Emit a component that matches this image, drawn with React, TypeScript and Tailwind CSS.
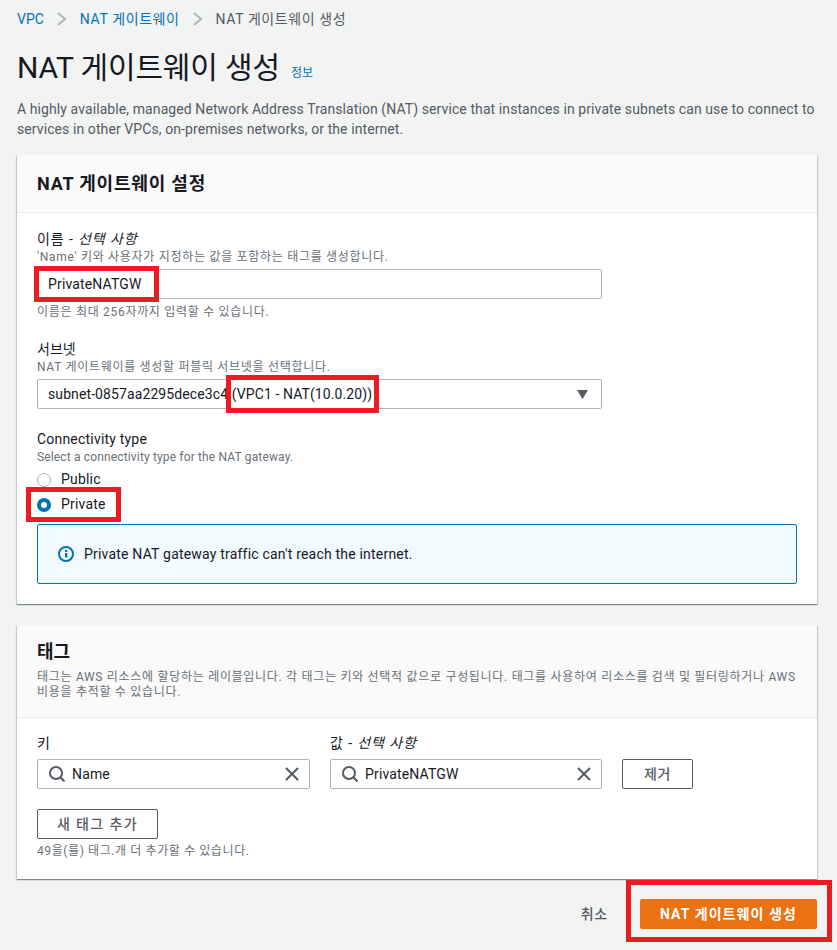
import React from "react";

const font = { fontFamily: 'Roboto, "Noto Sans CJK KR", sans-serif' };

function Search() {
  return (
    <svg width="16" height="16" viewBox="0 0 16 16" fill="none" stroke="#545b64" strokeWidth="2" className="shrink-0">
      <circle cx="7" cy="7" r="6" />
      <path d="M11.5 11.5 L15.5 15.5" />
    </svg>
  );
}

function Close() {
  return (
    <svg width="14" height="14" viewBox="0 0 14 14" fill="none" stroke="#545b64" strokeWidth="2" className="shrink-0">
      <path d="M1 1 L13 13 M13 1 L1 13" />
    </svg>
  );
}

function Chevron() {
  return (
    <svg width="10" height="16" viewBox="0 0 10 16" fill="none" stroke="#aab7b8" strokeWidth="2">
      <path d="M1 2 L8 8 L1 14" />
    </svg>
  );
}

function TokenInput({ value, className }: { value: string; className: string }) {
  return (
    <div className={`h-[30px] flex items-center pl-[11px] pr-[10px] bg-white border border-[#aab7b8] rounded-[2px] ${className}`}>
      <Search />
      <span className="ml-[7px] flex-1 pt-[1px] text-[14px] tracking-[0.15px] text-[#16191f]">{value}</span>
      <Close />
    </div>
  );
}

function Red({ className }: { className: string }) {
  return <div className={`absolute border-[5px] border-[#ed1c24] ${className}`} />;
}

export default function App() {
  return (
    <div className="relative w-[837px] h-[950px] overflow-hidden bg-[#f2f3f3] pl-[17px] pr-[20px]" style={font}>
      {/* breadcrumb */}
      <div className="h-[38px] flex items-center text-[14px] tracking-[0.6px] text-[#545b64]">
        <span className="text-[#0073bb] tracking-normal">VPC</span>
        <span className="mx-[13px] flex"><Chevron /></span>
        <span className="text-[#0073bb]">NAT 게이트웨이</span>
        <span className="mx-[13px] flex"><Chevron /></span>
        <span>NAT 게이트웨이 생성</span>
      </div>

      {/* title */}
      <div className="h-[56px] flex items-center pt-[3px]">
        <h1 className="text-[30px] leading-[36px] font-normal tracking-[-0.15px] text-[#16191f]">NAT 게이트웨이 생성</h1>
        <span className="ml-[11px] mt-[10px] text-[12px] text-[#0073bb]">정보</span>
      </div>

      <p className="mt-[5px] text-[14px] leading-[20px] tracking-[0.09px] text-[#545b64] w-[805px]">
        A highly available, managed Network Address Translation (NAT) service that instances in private subnets can use to connect to services in other VPCs, on-premises networks, or the internet.
      </p>

      {/* settings card */}
      <section className="mt-[16px] h-[449px] bg-white shadow-[0_1px_1px_0_rgba(0,28,36,0.3),1px_1px_1px_0_rgba(0,28,36,0.15),-1px_1px_1px_0_rgba(0,28,36,0.15)]">
        <div className="h-[58px] flex items-center px-[20px] bg-[#fafafa] border-b border-[#eaeded]">
          <h2 className="text-[18px] font-bold tracking-[0.8px] text-[#16191f]">NAT 게이트웨이 설정</h2>
        </div>
        <div className="px-[20px] pt-[16px]">
          <div className="text-[14px] leading-[20px] tracking-[0.9px] text-[#16191f]">이름 - <i>선택 사항</i></div>
          <div className="text-[12px] leading-[16px] tracking-[0.7px] text-[#687078]">'Name' 키와 사용자가 지정하는 값을 포함하는 태그를 생성합니다.</div>
          <div className="mt-[4px] w-[565px] h-[30px] flex items-center px-[10px] border border-[#aab7b8] rounded-[2px] text-[14px] tracking-[0.15px] text-[#16191f]">PrivateNATGW</div>
          <div className="mt-[5px] text-[12px] leading-[16px] tracking-[0.7px] text-[#687078]">이름은 최대 256자까지 입력할 수 있습니다.</div>

          <div className="mt-[19px] text-[14px] leading-[20px] text-[#16191f]">서브넷</div>
          <div className="text-[12px] leading-[16px] tracking-[0.7px] text-[#687078]">NAT 게이트웨이를 생성할 퍼블릭 서브넷을 선택합니다.</div>
          <div className="mt-[4px] w-[565px] h-[30px] flex items-center justify-between pl-[10px] pr-[13px] border border-[#aab7b8] rounded-[2px] text-[14px] tracking-[0.1px] text-[#16191f]">
            <span>subnet-0857aa2295dece3c4 (VPC1 - NAT(10.0.20))</span>
            <svg width="11" height="9" viewBox="0 0 11 9" fill="#545b64"><path d="M0 0 H11 L5.5 9 Z" /></svg>
          </div>

          <div className="mt-[20px] text-[14px] leading-[20px] tracking-[0.2px] text-[#16191f]">Connectivity type</div>
          <div className="text-[12px] leading-[16px] tracking-[0.15px] text-[#687078]">Select a connectivity type for the NAT gateway.</div>
          <div className="mt-[2px] h-[25px] flex items-center text-[14px] tracking-[0.2px] text-[#16191f]">
            <span className="w-[14px] h-[14px] rounded-full border border-[#aab7b8] bg-white" />
            <span className="ml-[10px]">Public</span>
          </div>
          <div className="h-[25px] flex items-center text-[14px] tracking-[0.2px] text-[#16191f]">
            <span className="w-[14px] h-[14px] rounded-full border-[4px] border-[#0073bb] bg-white" />
            <span className="ml-[10px]">Private</span>
          </div>
          <div className="mt-[7px] h-[60px] flex items-center pl-[20px] bg-[#f1faff] border border-[#0073bb] rounded-[2px] text-[14px] tracking-[0.2px] text-[#16191f]">
            <svg width="16" height="16" viewBox="0 0 16 16" fill="none" className="shrink-0">
              <circle cx="8" cy="8" r="7" stroke="#0073bb" strokeWidth="2" />
              <rect x="7" y="7" width="2.4" height="4.5" fill="#0073bb" />
              <rect x="7" y="4" width="2.4" height="2" fill="#0073bb" />
            </svg>
            <span className="ml-[10px]">Private NAT gateway traffic can't reach the internet.</span>
          </div>
        </div>
      </section>

      {/* tags card */}
      <section className="mt-[21px] h-[254px] bg-white shadow-[0_1px_1px_0_rgba(0,28,36,0.3),1px_1px_1px_0_rgba(0,28,36,0.15),-1px_1px_1px_0_rgba(0,28,36,0.15)]">
        <div className="h-[93px] px-[20px] pt-[15px] bg-[#fafafa] border-b border-[#eaeded]">
          <h2 className="text-[18px] leading-[24px] font-bold text-[#16191f]">태그</h2>
          <p className="mt-[6px] text-[12px] leading-[15px] tracking-[0.7px] text-[#687078]">
            태그는 AWS 리소스에 할당하는 레이블입니다. 각 태그는 키와 선택적 값으로 구성됩니다. 태그를 사용하여 리소스를 검색 및 필터링하거나 AWS 비용을 추적할 수 있습니다.
          </p>
        </div>
        <div className="px-[20px] pt-[15px]">
          <div className="flex gap-[20px] items-end">
            <div className="w-[273px]">
              <div className="text-[14px] leading-[20px] mb-[6px] text-[#16191f]">키</div>
              <TokenInput value="Name" className="w-full" />
            </div>
            <div className="w-[272px]">
              <div className="text-[14px] leading-[20px] mb-[6px] tracking-[0.9px] text-[#16191f]">값 - <i>선택 사항</i></div>
              <TokenInput value="PrivateNATGW" className="w-full" />
            </div>
            <div className="w-[71px] h-[30px] flex items-center justify-center bg-white border border-[#545b64] rounded-[2px] text-[14px] font-medium tracking-[0.6px] text-[#545b64]">제거</div>
          </div>
          <div className="mt-[20px] w-[121px] h-[30px] flex items-center justify-center bg-white border border-[#545b64] rounded-[2px] text-[14px] font-medium tracking-[1.4px] text-[#545b64]">새 태그 추가</div>
          <div className="mt-[4px] text-[12px] leading-[16px] tracking-[0.6px] text-[#687078]">49을(를) 태그.개 더 추가할 수 있습니다.</div>
        </div>
      </section>

      {/* footer */}
      <div className="mt-[20px] flex items-center justify-end">
        <span className="text-[14px] font-medium tracking-[0.8px] text-[#545b64] mr-[32px]">취소</span>
        <div className="w-[177px] h-[30px] flex items-center justify-center bg-[#ec7211] rounded-[2px] text-[14px] font-bold tracking-[1.1px] text-white">NAT 게이트웨이 생성</div>
      </div>

      {/* annotations */}
      <Red className="left-[34px] top-[266px] w-[125px] h-[36px]" />
      <Red className="left-[226px] top-[375px] w-[153px] h-[38px]" />
      <Red className="left-[26px] top-[487px] w-[95px] h-[35px]" />
      <Red className="left-[626px] top-[880px] w-[206px] h-[62px]" />
    </div>
  );
}
